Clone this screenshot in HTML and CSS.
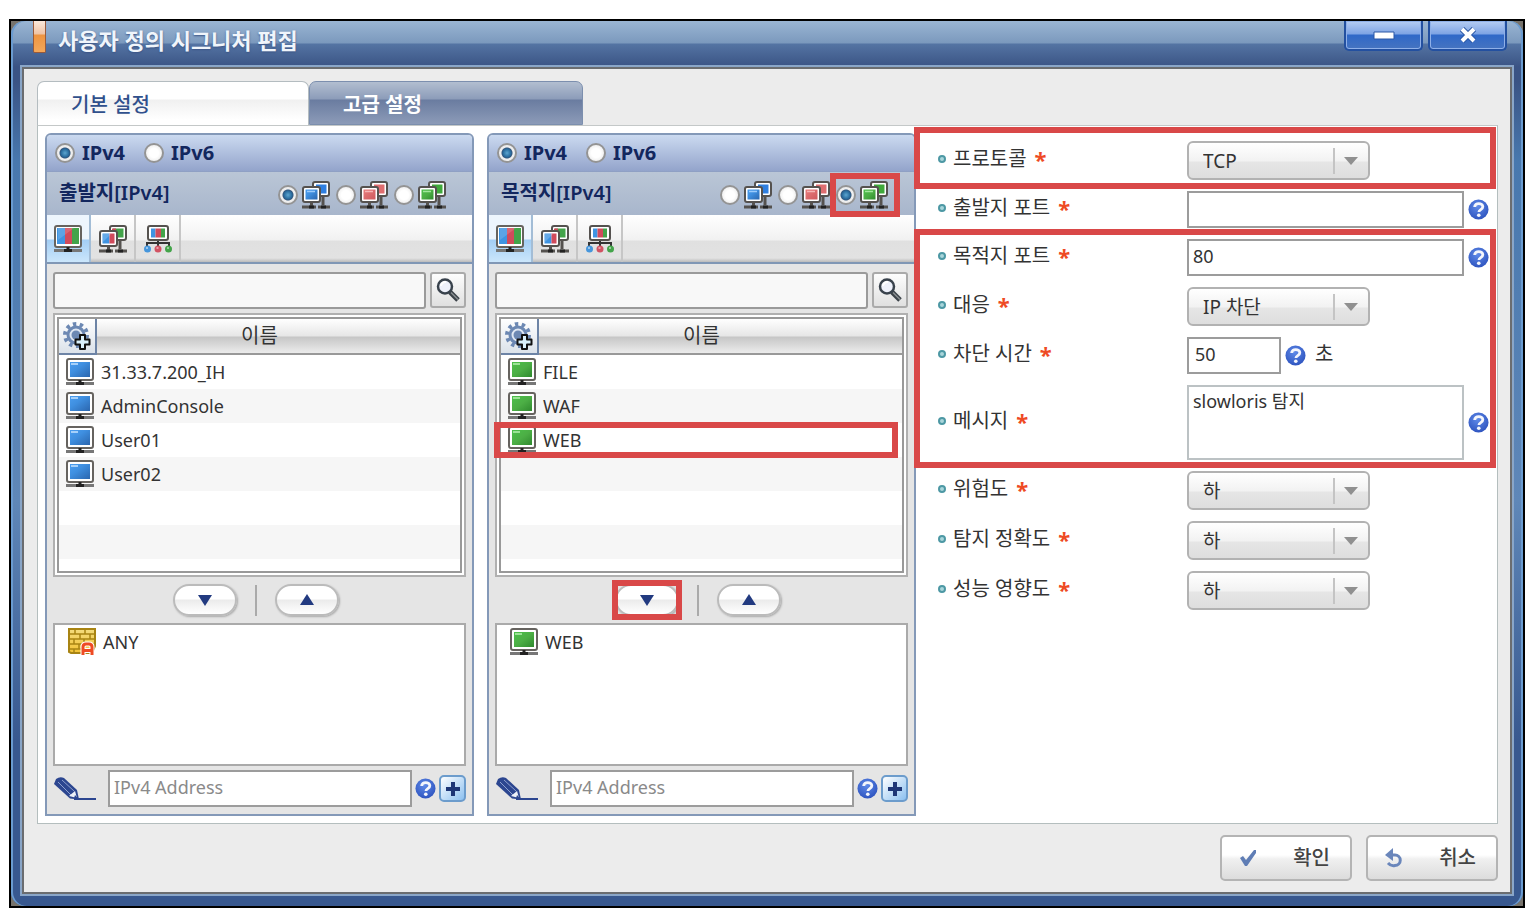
FILE: index.html
```html
<!DOCTYPE html>
<html lang="ko">
<head>
    <meta charset="UTF-8">
    <meta name="viewport" content="width=device-width, initial-scale=1.0">
    <title>사용자 정의 시그니처 편집</title>
    <link rel="stylesheet" href="styles.css">
</head>
<body>
    <!-- Icons -->
    <svg class="defs" width="0" height="0" aria-hidden="true">
        <defs>
            <linearGradient id="g-blue" x1="0" y1="0" x2="1" y2="1"><stop offset="0" stop-color="#4a9df0"/><stop offset=".4" stop-color="#3f8fe0"/><stop offset="1" stop-color="#2b66ae"/></linearGradient>
            <linearGradient id="g-green" x1="0" y1="0" x2="1" y2="1"><stop offset="0" stop-color="#4cc04a"/><stop offset=".5" stop-color="#4cae45"/><stop offset="1" stop-color="#2f8a2e"/></linearGradient>
            <linearGradient id="g-red" x1="0" y1="0" x2="1" y2="1"><stop offset="0" stop-color="#e87c7c"/><stop offset="1" stop-color="#cf5a5e"/></linearGradient>
            <radialGradient id="g-help" cx=".45" cy=".35" r=".65"><stop offset="0" stop-color="#5f8ae8"/><stop offset="1" stop-color="#2f55c0"/></radialGradient>
            <linearGradient id="g-brick" x1="0" y1="0" x2="0" y2="1"><stop offset="0" stop-color="#f3dc7e"/><stop offset="1" stop-color="#f2c234"/></linearGradient>
            <symbol id="monitor" viewBox="0 0 28 28">
                <rect x="1" y="1" width="26" height="21" rx="2" fill="#fff" stroke="#66635f" stroke-width="2"/>
                <rect x="4" y="4" width="20" height="15" fill="currentColor"/>
                <path d="M0 25.500h28" stroke="#777" stroke-width="3"/>
                <path d="M14 22v3M10 25.500h8" stroke="#222" stroke-width="3"/>
            </symbol>
            <symbol id="pc-blue" viewBox="0 0 28 28">
                <use href="#monitor" width="28" height="28"/>
                <rect x="4" y="4" width="20" height="15" fill="url(#g-blue)"/><path d="M5 6h7" stroke="#a5d0fa" stroke-width="2"/>
            </symbol>
            <symbol id="pc-green" viewBox="0 0 28 28">
                <use href="#monitor" width="28" height="28"/>
                <rect x="4" y="4" width="20" height="15" fill="url(#g-green)"/><path d="M5 6h7" stroke="#9be295" stroke-width="2"/>
            </symbol>
            <symbol id="pc-all" viewBox="0 0 28 28">
                <use href="#monitor" width="28" height="28"/>
                <path fill="#3f94e2" d="M3 3h8v16H3z"/><path fill="#d04b5c" d="M11 3h7v16h-7z"/><path fill="#43a44a" d="M18 3h7v16h-7z"/>
                <path d="M4 15L20 3h-16z" fill="#fff" opacity=".15"/>
            </symbol>
            <symbol id="pair-base" viewBox="0 0 28 28">
                <path d="M21 16v8M9.500 20v5M0 26h14M16 26h12" stroke="#55524f" stroke-width="3" fill="none"/>
                <rect x="11" y="1" width="16" height="14" rx="2" fill="#fff" stroke="#55524f" stroke-width="2"/>
                <path d="M7 26h5M19 26h5" stroke="#222" stroke-width="3"/>
            </symbol>
            <symbol id="pair-front" viewBox="0 0 28 28">
                <rect x="1" y="6" width="17" height="15" rx="2" fill="#fff" stroke="#55524f" stroke-width="2"/>
            </symbol>
            <symbol id="pair-blue" viewBox="0 0 28 28">
                <use href="#pair-base" width="28" height="28"/><path fill="#2f7fe0" d="M14 3.500h10.500v9H14z"/>
                <use href="#pair-front" width="28" height="28"/><path fill="url(#g-blue)" d="M3.500 8.500h12v10h-12z"/><path d="M5 10.500h8" stroke="#9ccbfb" stroke-width="1.500"/>
            </symbol>
            <symbol id="pair-red" viewBox="0 0 28 28">
                <use href="#pair-base" width="28" height="28"/><path fill="#df6e70" d="M14 3.500h10.500v9H14z"/>
                <use href="#pair-front" width="28" height="28"/><path fill="url(#g-red)" d="M3.500 8.500h12v10h-12z"/><path d="M5 10.500h8" stroke="#f6b5b5" stroke-width="1.500"/>
            </symbol>
            <symbol id="pair-green" viewBox="0 0 28 28">
                <use href="#pair-base" width="28" height="28"/><path fill="#3fa83b" d="M14 3.500h10.500v9H14z"/>
                <use href="#pair-front" width="28" height="28"/><path fill="url(#g-green)" d="M3.500 8.500h12v10h-12z"/><path d="M5 10.500h8" stroke="#a2e69d" stroke-width="1.500"/>
            </symbol>
            <symbol id="pair-all" viewBox="0 0 28 28">
                <use href="#pair-base" width="28" height="28"/><path fill="#43a44a" d="M14 3.500h10.500v9H14z"/><path fill="#d04b5c" d="M13 3.500h4v3h-4z"/>
                <use href="#pair-front" width="28" height="28"/><path fill="#3f94e2" d="M3.500 8.500h7v10h-7z"/><path fill="#d04b5c" d="M10.500 8.500h5v10h-5z"/><path fill="#fff" opacity=".2" d="M4 17l8-8H4z"/>
            </symbol>
            <symbol id="network" viewBox="0 0 28 28">
                <path d="M3 21v-3h22v3M14 14v7" stroke="#333" stroke-width="2" fill="none"/>
                <rect x="4" y="1" width="20" height="14" rx="2" fill="#fff" stroke="#55524f" stroke-width="2"/>
                <path fill="#3f94e2" d="M7 3.500h4.500v9H7z"/><path fill="#d04b5c" d="M11.500 3.500H17v9h-5.500z"/><path fill="#43a44a" d="M17 3.500h4v9h-4z"/>
                <circle cx="3.500" cy="24" r="3.500" fill="#4696dc"/><circle cx="14" cy="24" r="3.500" fill="#d25363"/><circle cx="24.500" cy="24" r="3.500" fill="#43a44a"/>
                <path d="M2 23h2M12.500 23h2M23 23h2" stroke="#fff" stroke-opacity=".6" stroke-width="1.500"/>
            </symbol>
            <symbol id="search" viewBox="0 0 26 26">
                <path d="M15 15l8 8" stroke="#3b4248" stroke-width="5"/><path d="M16 15.500l7 7" stroke="#8a8f92" stroke-width="1.500"/>
                <circle cx="10" cy="9.500" r="7" fill="#eef1fb" stroke="#39424c" stroke-width="2.500"/>
                <path d="M6 9a4.500 4.500 0 0 1 5-4" stroke="#fff" stroke-width="2" fill="none"/>
            </symbol>
            <symbol id="gear" viewBox="0 0 28 28">
                <circle cx="13" cy="13" r="11" fill="none" stroke="#6c88b3" stroke-width="4" stroke-dasharray="3.400 3.510"/>
                <circle cx="13" cy="13" r="8" fill="#dfe7f3" stroke="#6c88b3" stroke-width="3"/>
                <circle cx="13" cy="13" r="4.500" fill="#6c88b3"/>
                <path d="M17 13h5v4.500h4.500v5H22V27h-5v-4.500h-4.500v-5H17z" fill="#d9f0fb" stroke="#111" stroke-width="2" stroke-linejoin="round"/>
            </symbol>
            <symbol id="pencil" viewBox="0 0 42 24">
                <path d="M0 7L2 2q4-3 8-1l13 12 2 9.500-9-1z" fill="#2c4690"/>
                <path d="M4 5l13 13M8 3l12 11" stroke="#8ea0cf" stroke-width="1"/>
                <path d="M15 19l6-5 2 7z" fill="#eef1f8"/><path d="M21 18l4 4.500-5-1z" fill="#2c4690"/>
                <path d="M20 22h22" stroke="#2c4690" stroke-width="2"/>
            </symbol>
            <symbol id="help" viewBox="0 0 22 22">
                <circle cx="11" cy="11" r="10.500" fill="url(#g-help)"/>
                <path d="M7 8.500c0-5 8.500-4.800 8.500-.3 0 3-4 2.800-4 5.300" stroke="#f4f6fc" stroke-width="3" fill="none"/>
                <circle cx="11.300" cy="17" r="1.900" fill="#f4f6fc"/>
            </symbol>
            <symbol id="brick" viewBox="0 0 28 28">
                <path d="M1 1h26v17l-3 7H3l-2-1z" fill="url(#g-brick)" stroke="#a88413" stroke-width="2"/>
                <path d="M1 6h26M1 11h26M1 16h26M1 21h16M7 1v5M17 1v5M12 6v5M22 6v5M6 11v5M16 11v5M11 16v5M6 21v4" stroke="#a88413" stroke-width="1.500" fill="none"/>
                <path d="M15 28v-9q0-3 3-3h3q3 0 3 3v9M15 22.500h9" fill="none" stroke="#fff" stroke-width="5"/>
                <path d="M15 27v-8q0-3 3-3h3q3 0 3 3v8M15 22.500h9" fill="none" stroke="#ee4b23" stroke-width="3"/>
            </symbol>
            <symbol id="check" viewBox="0 0 18 18">
                <path d="M1 9l3-2 3 4L15 1h2v3L8 17H6z" fill="#5f7db5"/>
            </symbol>
            <symbol id="undo" viewBox="0 0 18 20">
                <path d="M5 7h5a5 5 0 0 1 0 10.500Q6 18.500 3 15" fill="none" stroke="#6a86bb" stroke-width="3"/>
                <path d="M0 7L8 0v13z" fill="#6a86bb"/>
            </symbol>
            <symbol id="plus" viewBox="0 0 14 14">
                <path d="M7 0v14M0 7h14" stroke="#1e3676" stroke-width="4"/>
            </symbol>
            <symbol id="down" viewBox="0 0 14 12"><path d="M0 1h14L7 12z" fill="#223a80"/></symbol>
            <symbol id="up" viewBox="0 0 14 12"><path d="M0 11h14L7 0z" fill="#223a80"/></symbol>
        </defs>
    </svg>

    <div class="frame">
    <div class="window">
        <header class="titlebar">
            <span class="title-mark"></span>
            <h1>사용자 정의 시그니처 편집</h1>
            <div class="window-buttons">
                <button type="button" class="window-btn" aria-label="최소화">
                    <svg width="22" height="10" viewBox="0 0 22 10"><path d="M1 2h20v7H1z" fill="#fff" stroke="#2a57a5" stroke-width="1"/></svg>
                </button>
                <button type="button" class="window-btn" aria-label="닫기">
                    <svg width="16" height="16" viewBox="0 0 16 16"><path d="M2 2l12 12M14 2L2 14" stroke="#2a57a5" stroke-width="6"/><path d="M2 2l12 12M14 2L2 14" stroke="#fff" stroke-width="4"/></svg>
                </button>
            </div>
        </header>

        <form class="client">
            <nav class="tabs">
                <button type="button" class="tab active">기본 설정</button>
                <button type="button" class="tab">고급 설정</button>
            </nav>

            <main class="content">
                <!-- 출발지 -->
                <section class="panel">
                    <div class="panel-head">
                        <label><input type="radio" class="radio" name="src-ver" checked> IPv4</label>
                        <label><input type="radio" class="radio" name="src-ver"> IPv6</label>
                    </div>
                    <div class="panel-sub">
                        <h2>출발지[IPv4]</h2>
                        <div class="kinds">
                            <label class="kind"><input type="radio" class="radio" name="src-kind" aria-label="내부" checked><svg class="icon"><use href="#pair-blue"/></svg></label>
                            <label class="kind"><input type="radio" class="radio" name="src-kind" aria-label="외부"><svg class="icon"><use href="#pair-red"/></svg></label>
                            <label class="kind"><input type="radio" class="radio" name="src-kind" aria-label="서버"><svg class="icon"><use href="#pair-green"/></svg></label>
                        </div>
                    </div>
                    <div class="toolbar">
                        <button type="button" class="tool active" aria-label="호스트"><svg class="icon"><use href="#pc-all"/></svg></button>
                        <button type="button" class="tool" aria-label="그룹"><svg class="icon"><use href="#pair-all"/></svg></button>
                        <button type="button" class="tool" aria-label="네트워크"><svg class="icon"><use href="#network"/></svg></button>
                    </div>
                    <div class="panel-body">
                        <div class="search">
                            <input type="text" class="search-input" aria-label="검색">
                            <button type="button" class="search-btn" aria-label="찾기"><svg width="26" height="26"><use href="#search"/></svg></button>
                        </div>
                        <div class="list">
                            <table class="list-table">
                                <thead>
                                    <tr>
                                        <th class="gear-cell"><button type="button" class="gear-btn" aria-label="추가"><svg class="icon"><use href="#gear"/></svg></button></th>
                                        <th class="name-head">이름</th>
                                    </tr>
                                </thead>
                                <tbody>
                                    <tr><td colspan="2"><span class="item"><svg class="icon"><use href="#pc-blue"/></svg>31.33.7.200_IH</span></td></tr>
                                    <tr><td colspan="2"><span class="item"><svg class="icon"><use href="#pc-blue"/></svg>AdminConsole</span></td></tr>
                                    <tr><td colspan="2"><span class="item"><svg class="icon"><use href="#pc-blue"/></svg>User01</span></td></tr>
                                    <tr><td colspan="2"><span class="item"><svg class="icon"><use href="#pc-blue"/></svg>User02</span></td></tr>
                                    <tr><td colspan="2"></td></tr>
                                    <tr><td colspan="2"></td></tr>
                                </tbody>
                            </table>
                        </div>
                        <div class="moves">
                            <span class="move"><button type="button" class="move-btn" aria-label="추가"><svg width="14" height="12"><use href="#down"/></svg></button></span>
                            <span class="divider"></span>
                            <span class="move"><button type="button" class="move-btn" aria-label="제거"><svg width="14" height="12"><use href="#up"/></svg></button></span>
                        </div>
                        <div class="chosen">
                            <span class="item"><svg class="icon"><use href="#brick"/></svg>ANY</span>
                        </div>
                        <div class="address">
                            <svg class="pencil" width="42" height="24"><use href="#pencil"/></svg>
                            <input type="text" class="field" placeholder="IPv4 Address" aria-label="IPv4 Address">
                            <svg class="help"><use href="#help"/></svg>
                            <button type="button" class="plus-btn" aria-label="주소 추가"><svg width="14" height="14"><use href="#plus"/></svg></button>
                        </div>
                    </div>
                </section>

                <!-- 목적지 -->
                <section class="panel">
                    <div class="panel-head">
                        <label><input type="radio" class="radio" name="dst-ver" checked> IPv4</label>
                        <label><input type="radio" class="radio" name="dst-ver"> IPv6</label>
                    </div>
                    <div class="panel-sub">
                        <h2>목적지[IPv4]</h2>
                        <div class="kinds">
                            <label class="kind"><input type="radio" class="radio" name="dst-kind" aria-label="내부"><svg class="icon"><use href="#pair-blue"/></svg></label>
                            <label class="kind"><input type="radio" class="radio" name="dst-kind" aria-label="외부"><svg class="icon"><use href="#pair-red"/></svg></label>
                            <label class="kind marked mark-kind"><input type="radio" class="radio" name="dst-kind" aria-label="서버" checked><svg class="icon"><use href="#pair-green"/></svg></label>
                        </div>
                    </div>
                    <div class="toolbar">
                        <button type="button" class="tool active" aria-label="호스트"><svg class="icon"><use href="#pc-all"/></svg></button>
                        <button type="button" class="tool" aria-label="그룹"><svg class="icon"><use href="#pair-all"/></svg></button>
                        <button type="button" class="tool" aria-label="네트워크"><svg class="icon"><use href="#network"/></svg></button>
                    </div>
                    <div class="panel-body">
                        <div class="search">
                            <input type="text" class="search-input" aria-label="검색">
                            <button type="button" class="search-btn" aria-label="찾기"><svg width="26" height="26"><use href="#search"/></svg></button>
                        </div>
                        <div class="list">
                            <table class="list-table">
                                <thead>
                                    <tr>
                                        <th class="gear-cell"><button type="button" class="gear-btn" aria-label="추가"><svg class="icon"><use href="#gear"/></svg></button></th>
                                        <th class="name-head">이름</th>
                                    </tr>
                                </thead>
                                <tbody>
                                    <tr><td colspan="2"><span class="item"><svg class="icon"><use href="#pc-green"/></svg>FILE</span></td></tr>
                                    <tr><td colspan="2"><span class="item"><svg class="icon"><use href="#pc-green"/></svg>WAF</span></td></tr>
                                    <tr><td colspan="2" class="marked mark-row"><span class="item"><svg class="icon"><use href="#pc-green"/></svg>WEB</span></td></tr>
                                    <tr><td colspan="2"></td></tr>
                                    <tr><td colspan="2"></td></tr>
                                    <tr><td colspan="2"></td></tr>
                                </tbody>
                            </table>
                        </div>
                        <div class="moves">
                            <span class="move marked mark-move"><button type="button" class="move-btn" aria-label="추가"><svg width="14" height="12"><use href="#down"/></svg></button></span>
                            <span class="divider"></span>
                            <span class="move"><button type="button" class="move-btn" aria-label="제거"><svg width="14" height="12"><use href="#up"/></svg></button></span>
                        </div>
                        <div class="chosen">
                            <span class="item"><svg class="icon"><use href="#pc-green"/></svg>WEB</span>
                        </div>
                        <div class="address">
                            <svg class="pencil" width="42" height="24"><use href="#pencil"/></svg>
                            <input type="text" class="field" placeholder="IPv4 Address" aria-label="IPv4 Address">
                            <svg class="help"><use href="#help"/></svg>
                            <button type="button" class="plus-btn" aria-label="주소 추가"><svg width="14" height="14"><use href="#plus"/></svg></button>
                        </div>
                    </div>
                </section>

                <!-- 옵션 -->
                <section class="options">
                    <div class="rows marked mark-protocol">
                        <div class="row">
                            <label for="protocol">프로토콜 <b>*</b></label>
                            <select id="protocol" class="select"><option>TCP</option></select>
                        </div>
                    </div>
                    <div class="rows">
                        <div class="row">
                            <label for="src-port">출발지 포트 <b>*</b></label>
                            <input type="text" id="src-port" class="field"><svg class="help"><use href="#help"/></svg>
                        </div>
                    </div>
                    <div class="rows marked mark-rows">
                        <div class="row">
                            <label for="dst-port">목적지 포트 <b>*</b></label>
                            <input type="text" id="dst-port" class="field" value="80"><svg class="help"><use href="#help"/></svg>
                        </div>
                        <div class="row">
                            <label for="action">대응 <b>*</b></label>
                            <select id="action" class="select"><option>IP 차단</option></select>
                        </div>
                        <div class="row">
                            <label for="block-time">차단 시간 <b>*</b></label>
                            <input type="text" id="block-time" class="field short" value="50"><svg class="help"><use href="#help"/></svg>
                            <span class="unit">초</span>
                        </div>
                        <div class="row">
                            <label for="message">메시지 <b>*</b></label>
                            <textarea id="message" class="field message">slowloris 탐지</textarea><svg class="help"><use href="#help"/></svg>
                        </div>
                    </div>
                    <div class="rows">
                        <div class="row">
                            <label for="risk">위험도 <b>*</b></label>
                            <select id="risk" class="select"><option>하</option></select>
                        </div>
                        <div class="row">
                            <label for="accuracy">탐지 정확도 <b>*</b></label>
                            <select id="accuracy" class="select"><option>하</option></select>
                        </div>
                        <div class="row">
                            <label for="impact">성능 영향도 <b>*</b></label>
                            <select id="impact" class="select"><option>하</option></select>
                        </div>
                    </div>
                </section>
            </main>

            <footer class="actions">
                <button type="submit" class="action-btn"><svg width="18" height="18"><use href="#check"/></svg>확인</button>
                <button type="button" class="action-btn"><svg width="18" height="20"><use href="#undo"/></svg>취소</button>
            </footer>
        </form>
    </div>
    </div>
</body>
</html>
```
FILE: styles.css
```css
*, *::before, *::after {
    box-sizing: border-box;
}

body {
    margin: 0;
    padding: 19px 7px 17px 9px;
    background-color: #fff;
    color: #333;
    font-family: "Noto Sans", "Noto Sans CJK KR", sans-serif;
    font-size: 18px;
    line-height: 24px;
}

button, input, select, textarea {
    font: inherit;
    color: inherit;
    margin: 0;
}

button {
    display: flex;
    align-items: center;
    justify-content: center;
    padding: 0;
    cursor: pointer;
}

svg {
    display: block;
    flex: none;
}

.defs {
    position: absolute;
}

.icon {
    width: 28px;
    height: 28px;
}

.help {
    width: 21px;
    height: 21px;
}

/* Window frame */
.frame {
    border: 2px solid #000;
    background-color: #77736c;
}

.window {
    border-radius: 14px;
    padding: 0 11px 12px;
    background: linear-gradient(#9ab5d3 0, #7b99bd 22px, #5474a3 23px, #3a5384 46px, #3a5384 60px, #4878ae 140px, #5f87b8 480px, #38588f 720px, #38588f 100%);
    box-shadow: inset 2px 0 #6a9bd0, inset -2px 0 #6a9bd0;
}

.titlebar {
    display: flex;
    align-items: flex-start;
    height: 46px;
    padding: 0 5px 0 11px;
}

.title-mark {
    width: 13px;
    height: 32px;
    border: 1px solid #9a5a3a;
    border-top: none;
    border-radius: 0 0 2px 2px;
    background: linear-gradient(#fbe9dc, #f0c3a4 13px, #ee9440 14px, #f5a85a);
}

h1 {
    margin: 0;
    padding-left: 12px;
    flex: 1;
    color: #f0f5fb;
    font-size: 22px;
    line-height: 38px;
    text-shadow: 0 1px 2px #3a5384;
}

.window-buttons {
    display: flex;
    gap: 5px;
}

.window-btn {
    width: 79px;
    height: 30px;
    border: 2px solid #2350a0;
    border-top: none;
    border-radius: 0 0 5px 5px;
    background: linear-gradient(#b6cdf3, #7da3e4 13px, #2f68c8 14px, #4674c0);
    box-shadow: inset 0 0 0 1px #8fb0e8;
}

.client {
    border: 2px solid #6b6d70;
    background-color: #ececec;
    padding: 12px 12px 11px 13px;
    box-shadow: 0 0 0 2px #8aa6c8;
}

/* Tabs */
.tabs {
    display: flex;
}

.tab {
    width: 274px;
    height: 44px;
    padding: 3px 0 0 33px;
    justify-content: flex-start;
    border: 1px solid #7c8fae;
    border-radius: 7px 7px 0 0;
    background: linear-gradient(#b2bed0, #8c9cb9 17px, #6a7ca0 18px, #8c9bb8);
    color: #fff;
    font-size: 20px;
    font-weight: bold;
}

.tab.active {
    width: 272px;
    border-color: #b4bcc0;
    border-bottom: none;
    background: linear-gradient(#fff 17px, #f0f0f0 18px, #fff 38px);
    color: #30508c;
    font-weight: 500;
}

.content {
    display: flex;
    padding: 7px 0 7px 7px;
    border: 1px solid #b4bebe;
    border-top-color: #c4c8c8;
    background-color: #fff;
}

/* Address panels */
.panel {
    width: 429px;
    margin-right: 13px;
    border: 2px solid #8499b8;
    border-radius: 6px 6px 0 0;
    background-color: #e5e5e5;
}

.panel + .panel {
    margin-right: 0;
}

.panel-head {
    display: flex;
    gap: 19px;
    height: 37px;
    padding: 0 0 0 8px;
    border-bottom: 1px solid #8fa0c4;
    border-radius: 4px 4px 0 0;
    background: linear-gradient(#cbdaf0, #93a4cb);
    color: #13275e;
    font-size: 20px;
    font-weight: bold;
}

.panel-head label {
    display: flex;
    align-items: center;
    gap: 7px;
}

.radio {
    appearance: none;
    flex: none;
    width: 20px;
    height: 20px;
    border: 2px solid #949494;
    border-radius: 50%;
    background: radial-gradient(#fff 40%, #e2e2e2);
}

.radio:checked {
    background: radial-gradient(circle, #5ca5d0 0, #286a9c 4px, #31567e 5px, #eee 6px);
}

.panel-sub {
    display: flex;
    align-items: center;
    justify-content: space-between;
    height: 43px;
    padding: 2px 26px 0 12px;
    background: linear-gradient(#bac6d6, #a8b6cc);
    color: #13275e;
}

h2 {
    margin: 0;
    padding-bottom: 4px;
    font-size: 20px;
    font-weight: 600;
}

.kinds {
    display: flex;
    gap: 6px;
}

.kind {
    display: flex;
    align-items: center;
    gap: 4px;
}

.toolbar {
    display: flex;
    height: 49px;
    border-bottom: 2px solid #8097b5;
    background: linear-gradient(#fff, #f1f1f1 25px, #e0e0e0 26px, #e2e2e2 43px, #bbb);
}

.tool {
    width: 45px;
    border: none;
    border-right: 2px solid #c6c6c6;
    background: none;
}

.tool.active {
    width: 44px;
    background: linear-gradient(#edf5fd 24px, #a3cef5 25px, #cbe6fb);
    border-color: #a3bdd6;
}

.panel-body {
    padding: 8px 6px 7px;
}

.search {
    display: flex;
    align-items: flex-start;
    gap: 4px;
}

.search-input {
    flex: 1;
    min-width: 0;
    height: 37px;
    padding: 0 6px;
    border: 2px solid #9a9a9a;
    border-radius: 3px;
    background-color: #f8f8f8;
}

.search-btn {
    width: 36px;
    height: 36px;
    border: 2px solid #aaa;
    border-radius: 3px;
    background: linear-gradient(#fdfdfd, #e0e0e0);
}

.list {
    margin-top: 4px;
    padding: 2px;
    border: 2px solid #b0b0b0;
    background: #fff;
}

.list::after {
    content: "";
    display: block;
    height: 14px;
    border: 2px solid #999;
    border-top: none;
}

.list-table {
    width: 100%;
    border: 2px solid #999;
    border-bottom: none;
    border-collapse: separate;
    border-spacing: 0;
}

.list-table th, .list-table td {
    padding: 0;
}

.list-table td {
    height: 34px;
}

.gear-cell {
    width: 38px;
}

.gear-btn {
    width: 38px;
    height: 36px;
    border: 2px solid #6d84a6;
    border-left: none;
    border-top: none;
    background: linear-gradient(#fff, #dbe2ea);
}

.list-table .name-head {
    padding-right: 38px;
    border-bottom: 2px solid #999;
    background: linear-gradient(#fff, #e6e6e6 17px, #c6c6c6 18px, #ececec);
    font-size: 20px;
    font-weight: normal;
}

.list-table tbody tr:nth-child(even) {
    background-color: #f6f6f6;
}

.item {
    display: flex;
    align-items: center;
    gap: 7px;
    padding-left: 7px;
}

.moves {
    display: flex;
    align-items: center;
    justify-content: center;
    gap: 18px;
    height: 46px;
    padding-right: 7px;
}

.divider {
    width: 2px;
    height: 31px;
    background-color: #aaa;
}

.move-btn {
    width: 64px;
    height: 32px;
    border: 2px solid #bbb;
    border-radius: 16px;
    background: linear-gradient(#fff 13px, #ebebeb 14px, #fff);
    box-shadow: 1px 1px 2px #aaa;
}

.chosen {
    height: 143px;
    padding: 3px 6px;
    border: 2px solid #aaa;
    background-color: #fff;
}

.address {
    display: flex;
    align-items: center;
    margin-top: 4px;
}

.address .field {
    flex: 1;
    min-width: 0;
    margin: 0 3px 0 12px;
}

.pencil {
    margin-left: 1px;
}

.address .field::placeholder {
    color: #8a8a8a;
}

.plus-btn {
    width: 27px;
    height: 27px;
    margin-left: 3px;
    border: 2px solid #6c9ccc;
    border-radius: 5px;
    background: linear-gradient(135deg, #fff, #8cc0f0);
}

/* Form fields */
.field {
    height: 37px;
    padding: 0 4px 4px;
    border: 2px solid #9c9c9c;
    border-radius: 0;
    background-color: #fff;
}

.options {
    flex: 1;
    display: flex;
    flex-direction: column;
    gap: 11px;
    padding: 8px 8px 0 22px;
}

.rows {
    display: flex;
    flex-direction: column;
    gap: 11px;
}

.row {
    display: flex;
    align-items: center;
}

.row label {
    display: flex;
    align-items: center;
    width: 249px;
    padding-bottom: 4px;
    font-size: 20px;
}

.row label::before {
    content: "";
    width: 8px;
    height: 8px;
    margin-right: 7px;
    border: 2px solid #4d98a4;
    border-radius: 50%;
    background-color: #a9d5da;
}

.row b {
    padding-left: 8px;
    color: #ee4a24;
    font-size: 22px;
    line-height: 20px;
}

.row .field {
    flex: 1;
    min-width: 0;
}

.row .short {
    flex: none;
    width: 94px;
    padding-left: 6px;
}

.row .message {
    height: 75px;
    padding-top: 2px;
    border-color: #bcc2c4;
    resize: none;
}

.row .help {
    margin-left: 4px;
}

.unit {
    padding: 0 0 4px 9px;
    font-size: 20px;
}

.select {
    appearance: none;
    width: 183px;
    height: 39px;
    padding: 0 50px 0 14px;
    border: 2px solid #b2b2b2;
    border-radius: 6px;
    font-size: 19px;
    background:
        url("data:image/svg+xml,%3Csvg xmlns='http://www.w3.org/2000/svg' width='32' height='26'%3E%3Cpath d='M1 0v26' stroke='%23c4c4c4' stroke-width='2'/%3E%3Cpath d='M11 9h14l-7 8z' fill='%23909090'/%3E%3C/svg%3E") no-repeat right 3px center,
        linear-gradient(#fff, #f2f2f2 18px, #e6e6e6 19px, #dedede);
}

.actions {
    display: flex;
    justify-content: flex-end;
    gap: 14px;
    padding-top: 11px;
}

.action-btn {
    width: 132px;
    height: 46px;
    justify-content: space-between;
    padding: 0 20px 0 17px;
    border: 2px solid #b4b4b4;
    border-radius: 5px;
    background: linear-gradient(#fff 18px, #f0f0f0 22px, #dcdcdc);
    color: #444;
    font-size: 20px;
    font-weight: 500;
}

/* Red emphasis boxes, drawn over the controls */
.marked {
    position: relative;
}

.marked::after {
    content: "";
    position: absolute;
    border: 6px solid #d94848;
    pointer-events: none;
}

.mark-kind::after {
    inset: -8px -12px -8px -6px;
}

.mark-row::after {
    inset: -1px 4px -1px -7px;
}

.mark-move::after {
    inset: -4px -3px;
}

.mark-protocol::after {
    inset: -14px -7px -9px -24px;
}

.mark-rows::after {
    inset: -10px -7px -8px -24px;
}
```
